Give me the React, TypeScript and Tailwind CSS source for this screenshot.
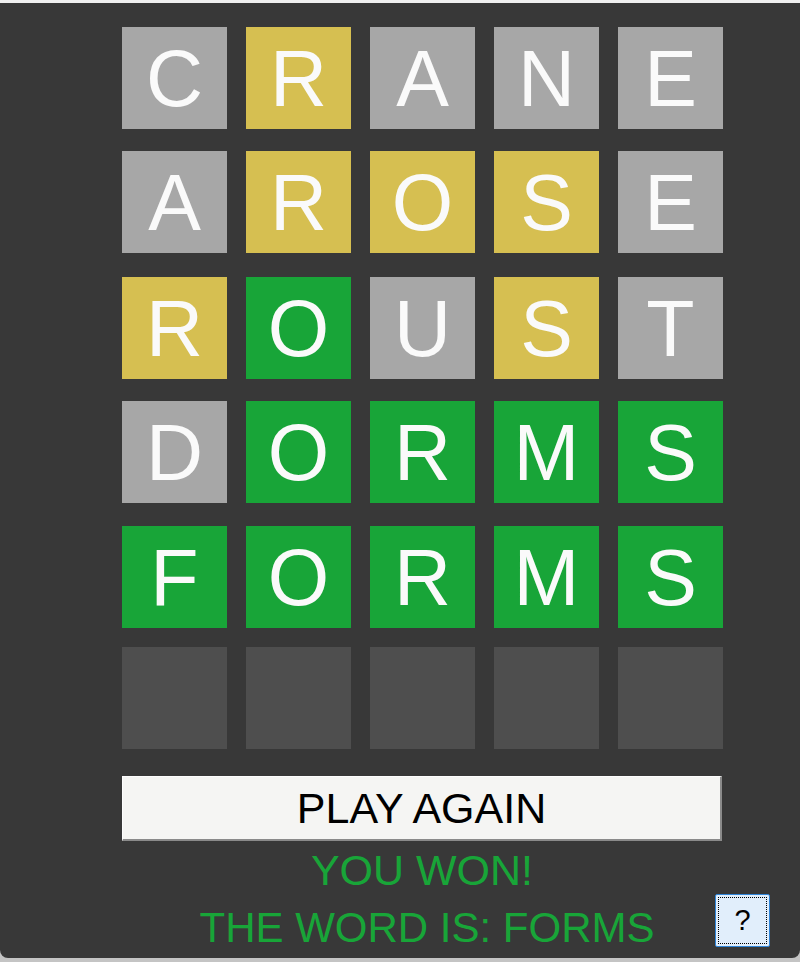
const rows: { letter: string; state: 'gray' | 'yellow' | 'green' | 'empty' }[][] = [
  [
    { letter: 'C', state: 'gray' },
    { letter: 'R', state: 'yellow' },
    { letter: 'A', state: 'gray' },
    { letter: 'N', state: 'gray' },
    { letter: 'E', state: 'gray' },
  ],
  [
    { letter: 'A', state: 'gray' },
    { letter: 'R', state: 'yellow' },
    { letter: 'O', state: 'yellow' },
    { letter: 'S', state: 'yellow' },
    { letter: 'E', state: 'gray' },
  ],
  [
    { letter: 'R', state: 'yellow' },
    { letter: 'O', state: 'green' },
    { letter: 'U', state: 'gray' },
    { letter: 'S', state: 'yellow' },
    { letter: 'T', state: 'gray' },
  ],
  [
    { letter: 'D', state: 'gray' },
    { letter: 'O', state: 'green' },
    { letter: 'R', state: 'green' },
    { letter: 'M', state: 'green' },
    { letter: 'S', state: 'green' },
  ],
  [
    { letter: 'F', state: 'green' },
    { letter: 'O', state: 'green' },
    { letter: 'R', state: 'green' },
    { letter: 'M', state: 'green' },
    { letter: 'S', state: 'green' },
  ],
  [
    { letter: '', state: 'empty' },
    { letter: '', state: 'empty' },
    { letter: '', state: 'empty' },
    { letter: '', state: 'empty' },
    { letter: '', state: 'empty' },
  ],
];

const tileColors = {
  gray: 'bg-[#a7a7a7]',
  yellow: 'bg-[#d6bf51]',
  green: 'bg-[#18a538]',
  empty: 'bg-[#4e4e4e]',
};

// tkinter grid leaves slightly uneven row spacing
const rowMargins = ['mt-0', 'mt-[22px]', 'mt-[24px]', 'mt-[22px]', 'mt-[23px]', 'mt-[19px]'];

export default function App() {
  return (
    <div className="w-[800px] h-[962px] bg-[#c4c4c4] overflow-hidden font-['Liberation_Sans',Arial,sans-serif]">
      <div className="h-[3px] bg-[#f0f0f0]" />
      <div className="relative h-[955px] bg-[#383838] rounded-b-lg pl-[122px] pt-[24px]">
        {/* Board */}
        <div className="flex flex-col">
          {rows.map((row, r) => (
            <div key={r} className={`flex gap-[19px] ${rowMargins[r]}`}>
              {row.map((tile, c) => (
                <div
                  key={c}
                  className={`w-[105px] h-[102px] flex items-center justify-center text-[79px] leading-none text-[#fafafa] ${tileColors[tile.state]}`}
                >
                  {tile.letter}
                </div>
              ))}
            </div>
          ))}
        </div>

        {/* Controls */}
        <div className="w-[600px] mt-[27px] flex flex-col items-center">
          <button className="w-[600px] h-[65px] bg-[#f5f5f3] border-t border-l border-t-[#fdfdfd] border-l-[#fdfdfd] border-b-2 border-r-2 border-b-[#8a8a8a] border-r-[#8a8a8a] text-[43px] text-black leading-none">
            PLAY AGAIN
          </button>
          <div className="mt-[6px] text-[43px] text-[#18a538] leading-[47px]">YOU WON!</div>
          <div className="mt-[10px] text-[42px] text-[#18a538] leading-[47px] pl-[10px]">THE WORD IS: FORMS</div>
        </div>

        {/* Help */}
        <button className="absolute left-[715px] top-[891px] w-[55px] h-[53px] bg-[#e1eefb] border border-[#2f85d8] rounded-[2px] p-[2px]">
          <div className="w-full h-full border border-dotted border-black flex items-center justify-center text-[29px] leading-none text-black">
            ?
          </div>
        </button>
      </div>
    </div>
  );
}
